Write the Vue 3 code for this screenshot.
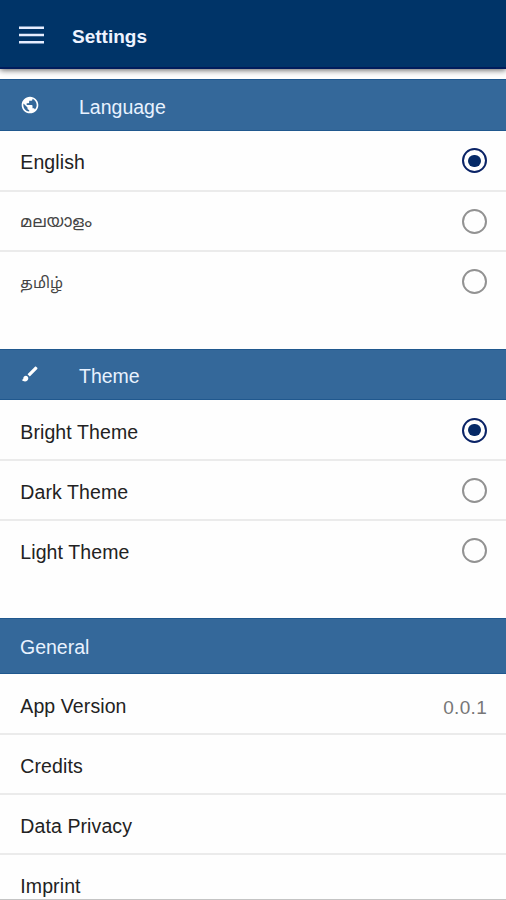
<template>
  <div class="settings">
    <header class="toolbar">
      <button class="menu-button" type="button" aria-label="Menu">
        <svg width="26" height="18" viewBox="0 0 26 18">
          <path d="M0 1.7h25M0 9h25M0 16.2h25" stroke="#e6edff" stroke-width="2.4" />
        </svg>
      </button>
      <h1 class="toolbar-title">Settings</h1>
    </header>

    <section v-for="group in groups" :key="group.name" class="group">
      <h2 class="group-header">
        <svg class="group-icon" viewBox="0 0 24 24">
          <path :d="group.icon" />
        </svg>
        <span class="group-title">{{ group.title }}</span>
      </h2>
      <label v-for="option in group.options" :key="option.value" class="item">
        <span class="item-label" :class="option.script">{{ option.label }}</span>
        <input
          v-model="selected[group.name]"
          class="radio-input"
          type="radio"
          :name="group.name"
          :value="option.value"
        />
        <span class="radio"></span>
      </label>
    </section>

    <section class="general">
      <h2 class="group-header general-header">General</h2>
      <div v-for="entry in general" :key="entry.label" class="item">
        <span class="item-label">{{ entry.label }}</span>
        <span v-if="entry.value" class="item-value">{{ entry.value }}</span>
      </div>
    </section>
  </div>
</template>

<script setup>
import { reactive } from 'vue'

const selected = reactive({ language: 'en', theme: 'bright' })

const groups = [
  {
    name: 'language',
    title: 'Language',
    icon: 'M12 2C6.48 2 2 6.48 2 12s4.48 10 10 10 10-4.48 10-10S17.52 2 12 2zm-1 17.93c-3.95-.49-7-3.85-7-7.93 0-.62.08-1.21.21-1.79L9 15v1c0 1.1.9 2 2 2v1.93zm6.9-2.54c-.26-.81-1-1.39-1.9-1.39h-1v-3c0-.55-.45-1-1-1H8v-2h2c.55 0 1-.45 1-1V7h2c1.1 0 2-.9 2-2v-.41c2.93 1.19 5 4.06 5 7.41 0 2.08-.8 3.97-2.1 5.39z',
    options: [
      { value: 'en', label: 'English' },
      { value: 'ml', label: 'മലയാളം', script: 'malayalam' },
      { value: 'ta', label: 'தமிழ்', script: 'tamil' }
    ]
  },
  {
    name: 'theme',
    title: 'Theme',
    icon: 'M7 14c-1.66 0-3 1.34-3 3 0 1.31-1.16 2-2 2 .92 1.22 2.49 2 4 2 2.21 0 4-1.79 4-4 0-1.66-1.34-3-3-3zm13.71-9.37l-1.34-1.34c-.39-.39-1.02-.39-1.41 0L9 12.25 11.75 15l8.96-8.96c.39-.39.39-1.02 0-1.41z',
    options: [
      { value: 'bright', label: 'Bright Theme' },
      { value: 'dark', label: 'Dark Theme' },
      { value: 'light', label: 'Light Theme' }
    ]
  }
]

const general = [
  { label: 'App Version', value: '0.0.1' },
  { label: 'Credits' },
  { label: 'Data Privacy' },
  { label: 'Imprint' }
]
</script>

<style>
body {
  margin: 0;
  background: #fff;
}
</style>

<style scoped>
.settings {
  box-sizing: border-box;
  height: 900px;
  overflow: hidden;
  border-bottom: 1px solid #c4c4c4;
  background: #fefefe;
  font-family: 'Liberation Sans', Arial, sans-serif;
  font-size: 19.5px;
  color: #222;
}

.toolbar {
  display: flex;
  align-items: center;
  box-sizing: border-box;
  height: 69px;
  margin-bottom: 10.4px;
  padding: 4px 19px 0;
  border-bottom: 2px solid #001c5c;
  background: #003468;
  box-shadow: 0 1px 6px rgba(0, 0, 0, 0.65);
}

.menu-button {
  display: flex;
  margin: 0 27px 2px 0;
  padding: 0;
  border: 0;
  background: none;
}

.toolbar-title {
  margin: 3px 0 0;
  font-size: 19px;
  line-height: 24px;
  color: #eef3ff;
}

.group {
  height: 269.2px;
}

.group-header {
  display: flex;
  align-items: center;
  box-sizing: border-box;
  height: 51.5px;
  margin: 0 0 0.5px;
  padding: 3px 20px 0;
  border-top: 1px solid #20588e;
  border-bottom: 1px solid #20588e;
  background: #34689a;
  font-size: 19.5px;
  font-weight: 400;
  color: #e8f2ff;
}

.group-icon {
  width: 20px;
  height: 20px;
  margin: -3px 39px 0 0;
  fill: #fff;
}

.group-title {
  padding-top: 2px;
}

.item {
  display: flex;
  align-items: center;
  justify-content: space-between;
  box-sizing: border-box;
  height: 60.2px;
  padding: 2px 19px 0 20.3px;
  border-bottom: 2px solid #ebebeb;
}

.group .item:last-child {
  border-bottom-color: transparent;
}

.item-label {
  padding-top: 3px;
  letter-spacing: 0.1px;
}

.malayalam {
  font-family: 'Noto Sans Malayalam', 'Noto Sans', sans-serif;
  font-size: 16.6px;
  color: #444;
}

.tamil {
  padding-top: 5px;
  font-family: 'Noto Sans Tamil', 'Noto Sans', sans-serif;
  font-size: 15.2px;
  color: #444;
}

.radio-input {
  width: 0;
  height: 0;
  margin: 0 0 0 auto;
  opacity: 0;
}

.radio {
  display: flex;
  align-items: center;
  justify-content: center;
  box-sizing: border-box;
  width: 25px;
  height: 25px;
  margin-bottom: 1px;
  border: 2px solid #929292;
  border-radius: 50%;
}

.radio-input:checked + .radio {
  border-color: #0a2366;
}

.radio-input:checked + .radio::after {
  content: '';
  width: 12.5px;
  height: 12.5px;
  border-radius: 50%;
  background: #052966;
}

.general-header {
  height: 56px;
  margin-bottom: 0.9px;
}

.item-value {
  padding-top: 7px;
  font-size: 19px;
  color: #777;
  letter-spacing: 0.3px;
}
</style>
